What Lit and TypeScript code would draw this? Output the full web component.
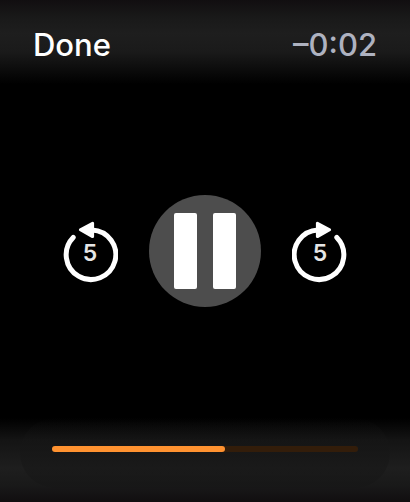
import { LitElement, html, css, svg } from "lit";
import { customElement, state } from "lit/decorators.js";

@customElement("app-root")
export class AppRoot extends LitElement {
  @state() private position = 0.557;

  static styles = css`
    :host {
      display: grid;
      grid-template-rows: auto 1fr auto;
      min-height: 100vh;
      background: #000;
      color: #fff;
      font-family: Inter, Roboto, "Liberation Sans", sans-serif;
    }
    button {
      border: 0;
      padding: 0;
      background: none;
      color: inherit;
      font: inherit;
      cursor: pointer;
    }
    .top {
      display: flex;
      justify-content: space-between;
      align-items: flex-start;
      padding: 25px 33px 19px;
      font-size: 31px;
      line-height: 40px;
      font-weight: 500;
      background: linear-gradient(#110e10, #191919 20%, #1e1e1e 40%, #1a1a1a 62%, #000 100%);
    }
    .time {
      color: #aeb2c0;
    }
    .controls {
      display: flex;
      justify-content: center;
      align-items: center;
      gap: 31px;
    }
    .skip {
      display: grid;
      place-items: center;
      width: 56px;
      height: 64px;
    }
    .skip > * {
      grid-area: 1 / 1;
    }
    .forward svg {
      transform: scaleX(-1);
    }
    .seconds {
      font-size: 23px;
      line-height: 28px;
      font-weight: 600;
      color: #e6e6e6;
      padding-top: 4px;
    }
    .pause {
      display: flex;
      justify-content: center;
      align-items: center;
      width: 112px;
      height: 112px;
      border-radius: 50%;
      background: #4d4d4d;
    }
    svg {
      display: block;
    }
    .bottom {
      padding: 0 20px 14px;
      background: linear-gradient(#000, #141414 26%, #1e1e1e 60%, #191919 80%, #110e10);
    }
    .scrubber {
      display: flex;
      align-items: center;
      padding: 28px 32px 36px;
      border-radius: 35px;
      background: linear-gradient(#0000, #16161680 40%);
    }
    .range {
      appearance: none;
      flex: 1;
      min-width: 0;
      height: 6px;
      margin: 0;
      border-radius: 3px;
      background: linear-gradient(
        to right,
        #ff9230 calc(3px + (100% - 6px) * var(--position)),
        #331d0a 0
      );
    }
    .range::-webkit-slider-thumb {
      appearance: none;
      width: 6px;
      height: 6px;
      border-radius: 50%;
      background: #ff9230;
    }
  `;

  private skip(direction: "back" | "forward") {
    return html`
      <button class="skip ${direction}" aria-label="Skip ${direction} 5 seconds">
        <svg width="56" height="64" viewBox="0 0 56 64" aria-hidden="true">
          ${svg`
            <path d="M11.2 18.4 A24.8 24.8 0 1 0 30 10.9" fill="none" stroke="#fff" stroke-width="5" stroke-linecap="round" />
            <path d="M18.4 10.8 L30.6 4.2 V17.6 Z" fill="#fff" stroke="#fff" stroke-width="3" stroke-linejoin="round" />
          `}
        </svg>
        <span class="seconds">5</span>
      </button>
    `;
  }

  private seek(event: Event) {
    this.position = Number((event.target as HTMLInputElement).value);
  }

  render() {
    return html`
      <header class="top">
        <button class="done">Done</button>
        <span class="time">–0:02</span>
      </header>
      <main class="controls">
        ${this.skip("back")}
        <button class="pause" aria-label="Pause">
          <svg width="62" height="76" viewBox="0 0 62 76" aria-hidden="true">
            <rect width="23" height="76" rx="2" fill="#fff" />
            <rect x="39" width="23" height="76" rx="2" fill="#fff" />
          </svg>
        </button>
        ${this.skip("forward")}
      </main>
      <footer class="bottom">
        <div class="scrubber">
          <input
            class="range"
            type="range"
            min="0"
            max="1"
            step="0.001"
            aria-label="Playback position"
            .value=${String(this.position)}
            style="--position: ${this.position}"
            @input=${this.seek}
          />
        </div>
      </footer>
    `;
  }
}
